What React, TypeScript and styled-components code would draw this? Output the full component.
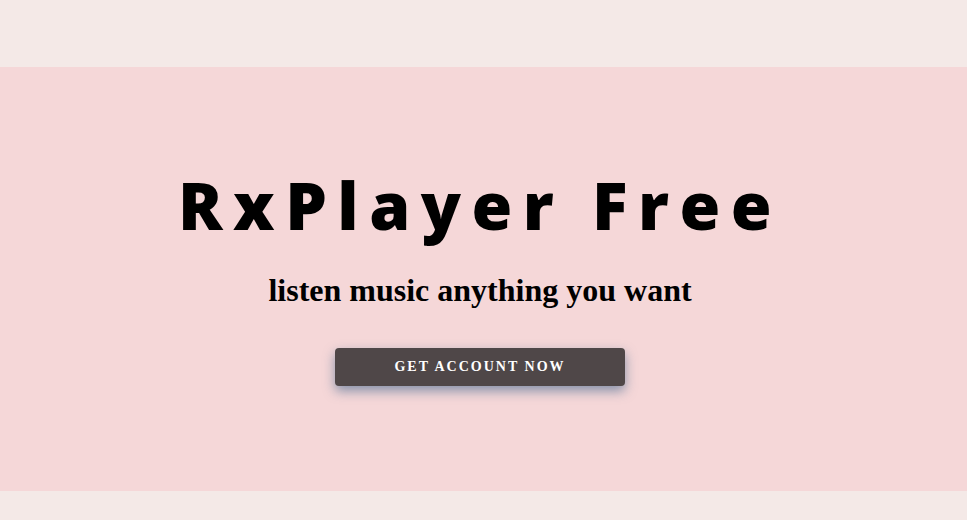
import React from 'react';
import styled, { createGlobalStyle } from 'styled-components';

const GlobalStyle = createGlobalStyle`
  html, body {
    margin: 0;
    padding: 0;
    background: #f4e9e7;
  }
`;

export default function App() {
  return (
    <React.Fragment>
      <GlobalStyle />
      <Page>
        <TopBar />
        <Hero>
          <Title>RxPlayer Free</Title>
          <Subtitle>listen music anything you want</Subtitle>
          <CtaButton type="button">Get account now</CtaButton>
        </Hero>
        <BottomBar />
      </Page>
    </React.Fragment>
  );
}

const Page = styled.div`
  display: flex;
  flex-direction: column;
  width: 100%;
  min-height: 520px;
`;

const TopBar = styled.header`
  height: 67px;
  background: #f4e9e7;
`;

const BottomBar = styled.footer`
  flex: 1;
  background: #f4e9e7;
`;

const Hero = styled.section`
  height: 424px;
  background: #f5d7d8;
  display: flex;
  flex-direction: column;
  align-items: center;
  padding: 99px 7px 0 0;
  box-sizing: border-box;
`;

const Title = styled.h1`
  margin: 0;
  font-family: "Open Sans", "Noto Sans", sans-serif;
  font-weight: 800;
  font-size: 66px;
  line-height: 76px;
  letter-spacing: 10.5px;
  color: #000;
`;

const Subtitle = styled.h2`
  margin: 30px 0 0;
  font-family: "Liberation Serif", serif;
  font-weight: 700;
  font-size: 32px;
  line-height: 36px;
  color: #000;
`;

const CtaButton = styled.button`
  margin-top: 40px;
  width: 290px;
  height: 38px;
  border: none;
  border-radius: 4px;
  background: #4f4748;
  color: #fff;
  font-family: "Liberation Serif", serif;
  font-weight: 700;
  font-size: 14px;
  letter-spacing: 2px;
  text-transform: uppercase;
  box-shadow: 0 5px 12px rgba(60, 100, 140, 0.6);
  cursor: pointer;
`;
